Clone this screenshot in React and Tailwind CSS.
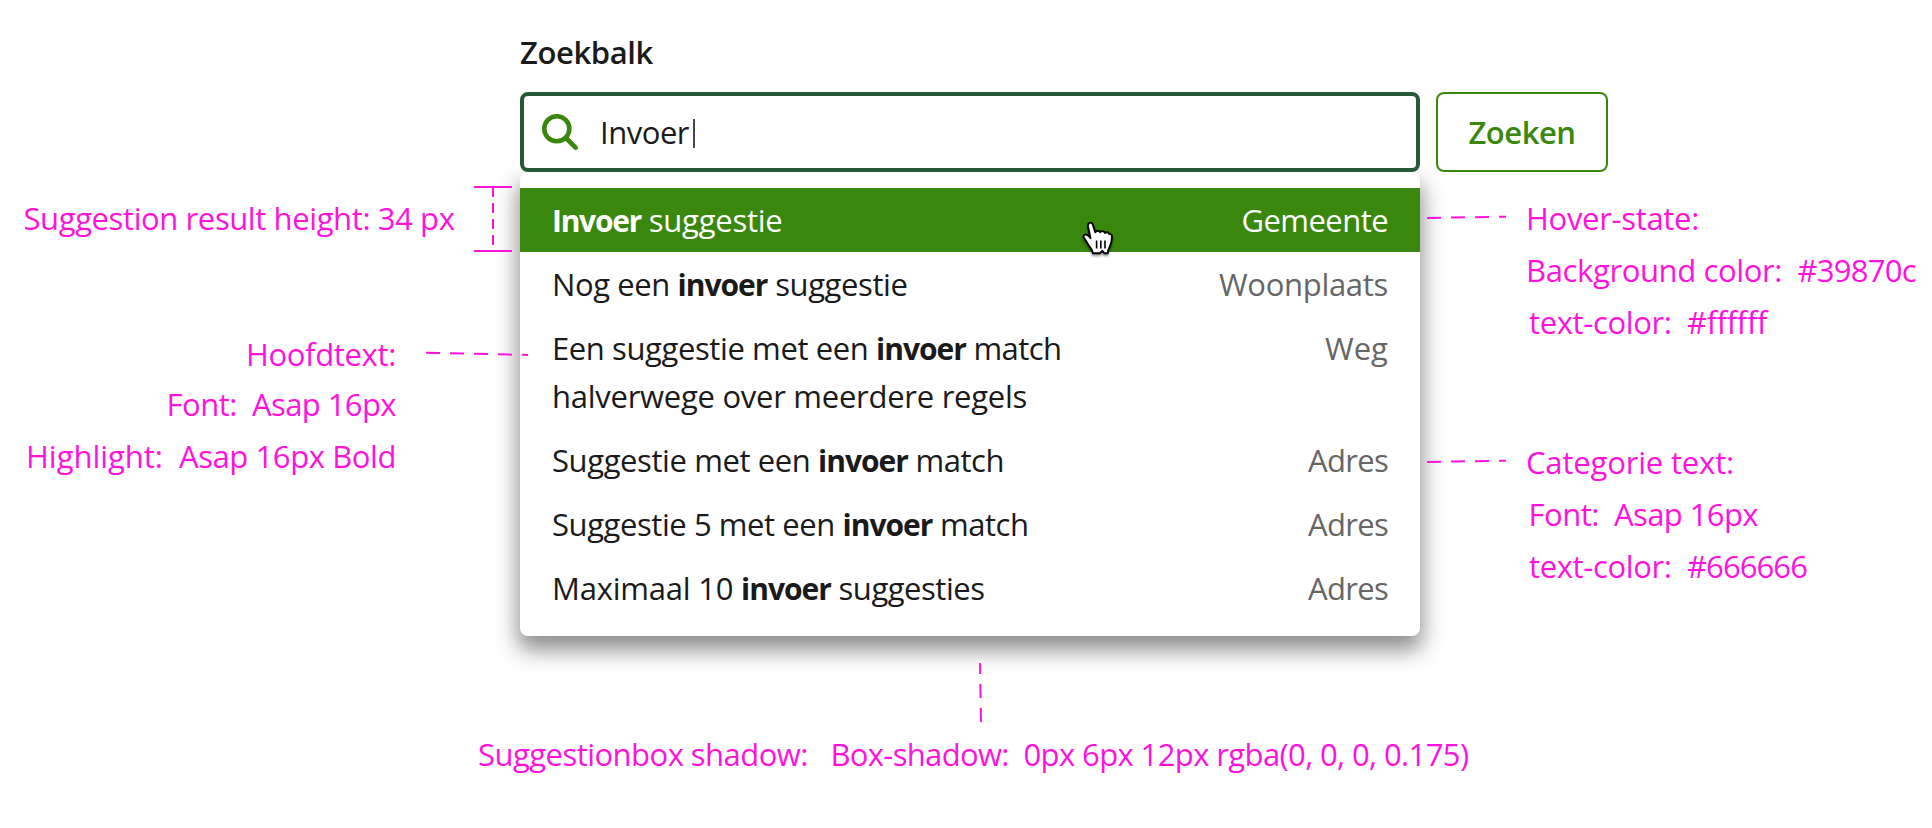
import { useLayoutEffect, useRef, useState } from "react";

// Text run whose tracking is adjusted so that it spans exactly `w` pixels.
function Run({ w, className = "", children }) {
  const ref = useRef(null);
  const [spacing, setSpacing] = useState(0);
  useLayoutEffect(() => {
    const natural = ref.current.getBoundingClientRect().width;
    setSpacing((w - natural) / children.length);
  }, [w, children]);
  return (
    <span ref={ref} className={`whitespace-pre ${className}`} style={{ letterSpacing: `${spacing}px` }}>
      {children}
    </span>
  );
}

const suggestions = [
  { lines: [[["Invoer", 89, true], [" suggestie", 141.5]]], category: "Gemeente", cw: 146.5, active: true },
  { lines: [[["Nog een ", 125.5], ["invoer", 90, true], [" suggestie", 140]]], category: "Woonplaats", cw: 169 },
  {
    lines: [
      [["Een suggestie met een ", 324], ["invoer", 90, true], [" match", 95.5]],
      [["halverwege over meerdere regels", 475]],
    ],
    category: "Weg",
    cw: 63,
  },
  { lines: [[["Suggestie met een ", 266], ["invoer", 90, true], [" match", 96]]], category: "Adres", cw: 80 },
  { lines: [[["Suggestie 5 met een ", 290.5], ["invoer", 90, true], [" match", 96]]], category: "Adres", cw: 80 },
  { lines: [[["Maximaal 10 ", 189], ["invoer", 90, true], [" suggesties", 153.5]]], category: "Adres", cw: 80 },
];

function Suggestion({ lines, category, cw, active }) {
  return (
    <li className={`flex justify-between px-8 py-2 ${active ? "bg-[#39870c] text-white" : "text-[#1a1a1a]"}`}>
      <div>
        {lines.map((line, i) => (
          <div key={i} className="h-12 whitespace-nowrap">
            {line.map(([text, w, bold], j) => (
              <Run key={j} w={w} className={bold ? "text-[30px] leading-none font-bold" : ""}>
                {text}
              </Run>
            ))}
          </div>
        ))}
      </div>
      <div className={active ? "text-white" : "text-[#666666]"}>
        <Run w={cw}>{category}</Run>
      </div>
    </li>
  );
}

function Note({ parts, className = "" }) {
  return (
    <p className={`whitespace-nowrap ${className}`}>
      {parts.map(([text, w], i) => (
        <Run key={i} w={w}>
          {text}
        </Run>
      ))}
    </p>
  );
}

function SearchIcon() {
  return (
    <svg className="size-9 shrink-0" viewBox="0 0 36 36" fill="none" stroke="#39870c" strokeWidth="4.6">
      <circle cx="14.8" cy="14.8" r="12.5" />
      <path d="M24 24l9.6 9.6" strokeLinecap="round" />
    </svg>
  );
}

function HandCursor() {
  return (
    <svg className="absolute left-[560px] top-[46px] h-[40px] w-[36px] drop-shadow-[0_2px_1px_rgba(0,0,0,0.4)]" viewBox="1080 218 36 40">
      <path
        d="M1090.500 238.200L1088 226.500C1087.400 222.300 1091.800 221.500 1092.800 224.500L1095.300 232.300C1096.100 230.300 1099.400 230.300 1100.100 232.300C1101.200 230.600 1104.400 230.800 1105 233C1106.400 231.700 1108.700 232.100 1109.200 234C1110.700 233.400 1112 234.800 1112 237C1112 240.800 1111.100 244.200 1109.600 247.200C1108.500 249.200 1107.700 250.600 1107.800 253.200L1104.200 253.200L1102.300 250.800L1100 253.200L1092.800 253.200C1092.900 249.800 1090.500 248.200 1088.600 245.200C1087 242.700 1086.200 240.800 1084.200 238.300C1082.200 235.700 1085 233.400 1087.500 235.100C1088.700 236 1089.500 237 1090.500 238.200Z"
        fill="#fff"
        stroke="#000"
        strokeWidth="1.9"
        strokeLinejoin="round"
      />
      <path d="M1096.600 240.500v8M1100.800 240.500v8M1105 240.500v8" stroke="#000" strokeWidth="1.600" />
    </svg>
  );
}

// Dashed leader lines that run over the shadow and the edge of the suggestion box.
function Leaders() {
  return (
    <svg className="pointer-events-none absolute left-0 top-0 z-20 h-[828px] w-[1932px]" fill="none" stroke="#ff13dc" strokeWidth="2">
      <path d="M474 187h38M474 251h38" />
      <path d="M493 187v61" strokeDasharray="10 6" />
      <path d="M426 352.700L528 355" strokeDasharray="14 10" />
      <path d="M1427 218l79-1.300" strokeDasharray="14 10" />
      <path d="M1427 462l79-1.300" strokeDasharray="14 10" />
      <path d="M981 722L980 663" strokeDasharray="14 10" />
    </svg>
  );
}

export default function App() {
  return (
    <div className="relative h-[828px] w-[1932px] overflow-hidden bg-white font-['Open_Sans',sans-serif] text-[31px] leading-[48px] text-[#ff13dc]">
      <div className="grid h-[636px] grid-cols-[520px_900px_1fr]">
        <aside className="relative z-10 flex flex-col">
          <Note className="mt-[194px] ml-[23.5px]" parts={[["Suggestion result height: 34 px", 431]]} />
          <div className="mt-[88px] flex flex-col items-end pr-[124px]">
            <Note parts={[["Hoofdtext:", 150]]} />
            <Note className="mt-0.5" parts={[["Font:  ", 85.5], ["Asap 16px", 144]]} />
            <Note className="mt-1" parts={[["Highlight:  ", 153], ["Asap 16px Bold", 217]]} />
          </div>
        </aside>

        <main className="flex flex-col">
          <label className="mt-7 text-[#1a1a1a]">
            <Run w={133} className="font-[650]">
              Zoekbalk
            </Run>
          </label>
          <div className="relative z-10 mt-4 flex h-20 items-center rounded-lg border-4 border-[#275937] bg-white pl-[18px] text-[#1a1a1a]">
            <SearchIcon />
            <span className="ml-[22px]">
              <Run w={89}>Invoer</Run>
            </span>
            <span className="mt-0.5 ml-[3.5px] h-[29px] w-0.5 bg-[#1a1a1a]/80" />
          </div>
          <ul className="relative rounded-lg bg-white py-4 shadow-[0_12px_22px_2px_rgba(0,0,0,0.45)]">
            {suggestions.map((s, i) => (
              <Suggestion key={i} {...s} />
            ))}
            <HandCursor />
          </ul>
        </main>

        <aside className="relative z-10 flex flex-col items-start">
          <button className="mt-[92px] ml-4 flex h-20 w-[172px] items-center justify-center rounded-lg border-2 border-[#39870c] bg-white text-[#39870c]">
            <Run w={107} className="font-[650]">
              Zoeken
            </Run>
          </button>
          <Note className="mt-[22px] ml-[106px]" parts={[["Hover-state:", 173]]} />
          <Note className="mt-1 ml-[106px]" parts={[["Background color:  ", 271.5], ["#39870c", 118.5]]} />
          <Note className="mt-1 ml-[109px]" parts={[["text-color:  ", 158], ["#ffffff", 80]]} />
          <Note className="mt-[92px] ml-[106px]" parts={[["Categorie text:", 208]]} />
          <Note className="mt-1 ml-[108.5px]" parts={[["Font:  ", 85.5], ["Asap 16px", 144]]} />
          <Note className="mt-1 ml-[109px]" parts={[["text-color:  ", 158], ["#666666", 120]]} />
        </aside>
      </div>

      <footer className="pt-[94px] pl-[478px]">
        <Note parts={[["Suggestionbox shadow:   ", 352.5], ["Box-shadow:  ", 193], ["0px 6px 12px rgba(0, 0, 0, 0.175)", 445]]} />
      </footer>

      <Leaders />
    </div>
  );
}
